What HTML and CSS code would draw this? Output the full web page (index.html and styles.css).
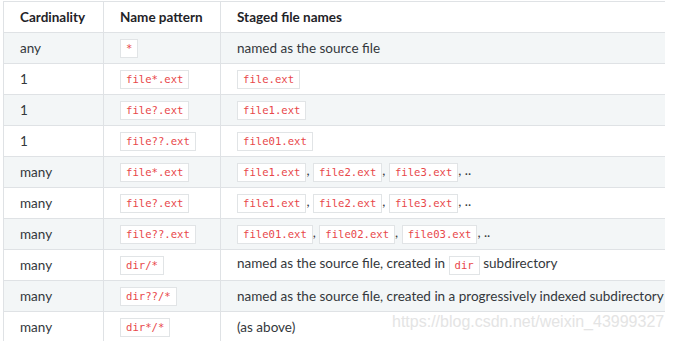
FILE: index.html
```html
<!DOCTYPE html>
<html lang="en">
<head>
    <meta charset="UTF-8">
    <title>Staged file names</title>
    <link rel="stylesheet" href="styles.css">
</head>
<body>

<div class="table-wrap">
    <table class="stage-table">
        <colgroup>
            <col class="col-card">
            <col class="col-pattern">
            <col class="col-names">
        </colgroup>
        <thead>
            <tr>
                <th>Cardinality</th>
                <th>Name pattern</th>
                <th>Staged file names</th>
            </tr>
        </thead>
        <tbody>
            <tr>
                <td>any</td>
                <td><code>*</code></td>
                <td>named as the source file</td>
            </tr>
            <tr>
                <td>1</td>
                <td><code>file*.ext</code></td>
                <td><code>file.ext</code></td>
            </tr>
            <tr>
                <td>1</td>
                <td><code>file?.ext</code></td>
                <td><code>file1.ext</code></td>
            </tr>
            <tr>
                <td>1</td>
                <td><code>file??.ext</code></td>
                <td><code>file01.ext</code></td>
            </tr>
            <tr>
                <td>many</td>
                <td><code>file*.ext</code></td>
                <td><code>file1.ext</code>, <code>file2.ext</code>, <code>file3.ext</code>, ..</td>
            </tr>
            <tr>
                <td>many</td>
                <td><code>file?.ext</code></td>
                <td><code>file1.ext</code>, <code>file2.ext</code>, <code>file3.ext</code>, ..</td>
            </tr>
            <tr>
                <td>many</td>
                <td><code>file??.ext</code></td>
                <td><code>file01.ext</code>, <code>file02.ext</code>, <code>file03.ext</code>, ..</td>
            </tr>
            <tr>
                <td>many</td>
                <td><code>dir/*</code></td>
                <td>named as the source file, created in <code>dir</code> subdirectory</td>
            </tr>
            <tr>
                <td>many</td>
                <td><code>dir??/*</code></td>
                <td>named as the source file, created in a progressively indexed subdirectory</td>
            </tr>
            <tr>
                <td>many</td>
                <td><code>dir*/*</code></td>
                <td>(as above)</td>
            </tr>
        </tbody>
    </table>
</div>

<!-- watermark over the last row -->
<span class="watermark">https://blog.csdn.net/weixin_43999327</span>

</body>
</html>
```

FILE: styles.css
```css
body {
    margin: 0;
    padding: 1px 0 0 3px;
    background-color: #fff;
    font-family: 'Lato', 'Noto Sans', sans-serif;
    font-size: 13.5px;
    color: #34383c;
}

.table-wrap {
    width: 662px;
    height: 340px;
    overflow: hidden;
}

.stage-table {
    table-layout: fixed;
    width: 680px;
    border-collapse: collapse;
    white-space: nowrap;
}

.col-card {
    width: 100px;
}

.col-pattern {
    width: 117px;
}

.col-names {
    width: 463px;
}

.stage-table th,
.stage-table td {
    height: 30px;
    padding: 0 16px;
    border: 1px solid #dfe2e5;
    text-align: left;
    vertical-align: middle;
}

.stage-table th {
    font-weight: bold;
    color: #1f2328;
}

.stage-table tbody tr:nth-child(odd) {
    background-color: #f3f6f7;
}

code {
    display: inline-block;
    padding: 0 5px;
    border: 1px solid #e1e4e6;
    background-color: #fff;
    color: #e8474a;
    font-family: 'DejaVu Sans Mono', monospace;
    font-size: 10.6px;
    line-height: 17px;
    vertical-align: middle;
}

.watermark {
    position: absolute;
    top: 313px;
    left: 392px;
    font-family: 'Liberation Sans', Arial, sans-serif;
    font-size: 16px;
    color: #e4e4e4;
}
```
